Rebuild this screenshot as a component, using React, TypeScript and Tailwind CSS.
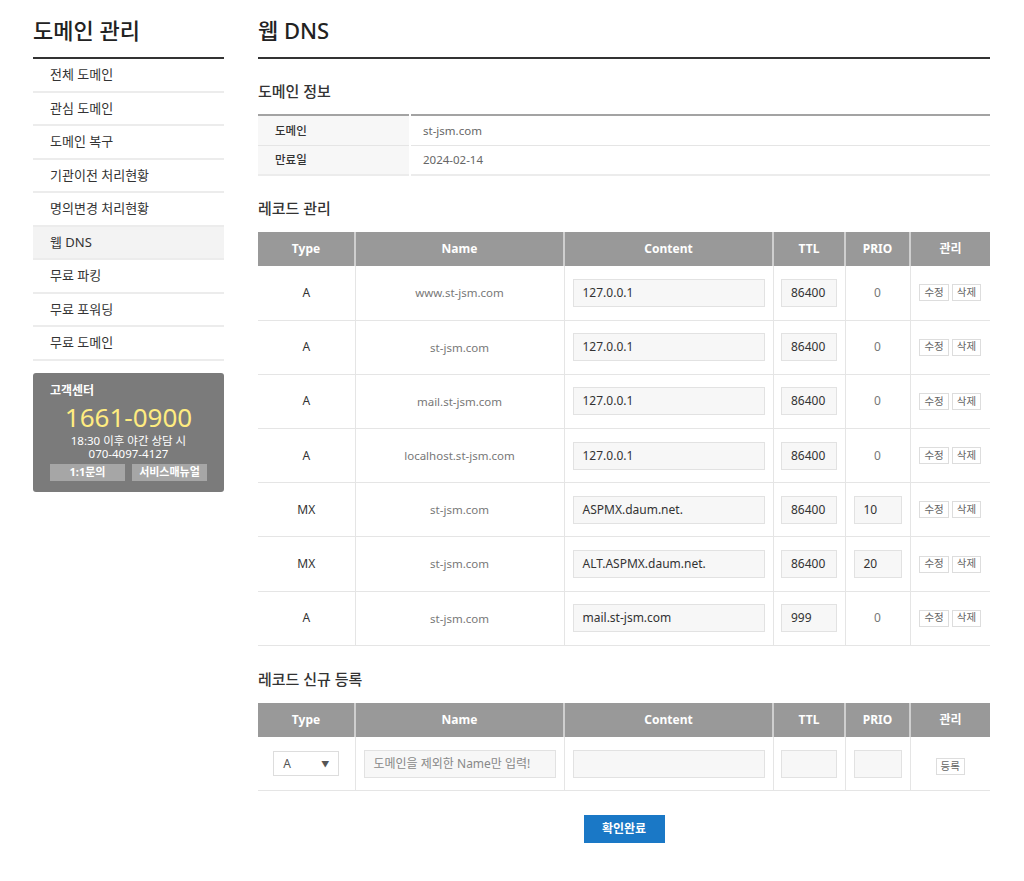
import React from "react";

const font = { fontFamily: '"Noto Sans", "Noto Sans CJK KR", sans-serif' };

const menu = [
  "전체 도메인",
  "관심 도메인",
  "도메인 복구",
  "기관이전 처리현황",
  "명의변경 처리현황",
  "웹 DNS",
  "무료 파킹",
  "무료 포워딩",
  "무료 도메인",
];

const records = [
  { type: "A", name: "www.st-jsm.com", content: "127.0.0.1", ttl: "86400", prio: "0", prioInput: false },
  { type: "A", name: "st-jsm.com", content: "127.0.0.1", ttl: "86400", prio: "0", prioInput: false },
  { type: "A", name: "mail.st-jsm.com", content: "127.0.0.1", ttl: "86400", prio: "0", prioInput: false },
  { type: "A", name: "localhost.st-jsm.com", content: "127.0.0.1", ttl: "86400", prio: "0", prioInput: false },
  { type: "MX", name: "st-jsm.com", content: "ASPMX.daum.net.", ttl: "86400", prio: "10", prioInput: true },
  { type: "MX", name: "st-jsm.com", content: "ALT.ASPMX.daum.net.", ttl: "86400", prio: "20", prioInput: true },
  { type: "A", name: "st-jsm.com", content: "mail.st-jsm.com", ttl: "999", prio: "0", prioInput: false },
];

function Head() {
  const cols = ["Type", "Name", "Content", "TTL", "PRIO", "관리"];
  return (
    <thead>
      <tr className="h-[34px] bg-[#999999]">
        {cols.map((c, i) => (
          <th
            key={c}
            className={`text-[12px] font-bold text-white ${i > 0 ? "border-l-2 border-[#cfcfcf]" : ""}`}
          >
            {c}
          </th>
        ))}
      </tr>
    </thead>
  );
}

function Cols() {
  return (
    <colgroup>
      <col className="w-[97px]" />
      <col className="w-[209px]" />
      <col className="w-[209px]" />
      <col className="w-[72px]" />
      <col className="w-[65px]" />
      <col className="w-[80px]" />
    </colgroup>
  );
}

function Box({ w, value, placeholder }: { w: string; value?: string; placeholder?: string }) {
  return (
    <div
      className={`${w} mx-auto flex h-[28px] items-center border border-[#e2e2e2] bg-[#f7f7f7] px-[9px] text-[12px] text-[#333]`}
    >
      {value ?? <span className="text-[#888]">{placeholder}</span>}
    </div>
  );
}

function SmallBtn({ children }: { children: React.ReactNode }) {
  return (
    <span className="inline-flex h-[17px] items-center border border-[#dddddd] bg-white px-[4px] text-[10.5px] text-[#666]">
      {children}
    </span>
  );
}

export default function App() {
  return (
    <div className="min-h-[881px] w-[1024px] bg-white text-[#333]" style={font}>
      <div className="flex pl-[33px]">
        {/* Sidebar */}
        <aside className="w-[191px] shrink-0">
          <div className="border-b-2 border-[#333] pb-[11px] pt-[14px]">
            <h1 className="text-[22px] leading-[32px] font-medium text-[#222]">도메인 관리</h1>
          </div>
          <ul>
            {menu.map((m) => (
              <li
                key={m}
                className={`flex h-[33.5px] items-center border-b-2 border-[#ececec] pl-[17px] text-[13px] text-[#333] ${
                  m === "웹 DNS" ? "bg-[#f3f3f3]" : ""
                }`}
              >
                {m}
              </li>
            ))}
          </ul>
          <div className="mt-[12px] rounded-[3px] bg-[#7b7b7b] px-[17px] pb-[11px] pt-[10px] text-white">
            <div className="text-[12px] font-bold leading-[16px]">고객센터</div>
            <div className="mt-[3px] text-center text-[26px] leading-[30px] text-[#ffec80]">1661-0900</div>
            <div className="mt-[2px] text-center text-[11.5px] leading-[13px]">18:30 이후 야간 상담 시</div>
            <div className="text-center text-[11.5px] leading-[13px]">070-4097-4127</div>
            <div className="mt-[4.5px] flex justify-between">
              <span className="flex h-[17px] w-[75px] items-center justify-center bg-[#a6a6a6] text-[11px] font-bold">
                1:1문의
              </span>
              <span className="flex h-[17px] w-[75px] items-center justify-center bg-[#a6a6a6] text-[11px] font-bold">
                서비스매뉴얼
              </span>
            </div>
          </div>
        </aside>

        {/* Main */}
        <main className="ml-[34px] w-[732px]">
          <div className="border-b-2 border-[#333] pb-[11px] pt-[14px]">
            <h1 className="text-[22px] leading-[32px] font-medium text-[#222]">웹 DNS</h1>
          </div>

          <h2 className="mb-[12px] mt-[21px] text-[15px] leading-[22px] font-medium text-[#333]">도메인 정보</h2>
          <table className="w-full table-fixed border-collapse border-t-2 border-[#a3a3a3] text-[11.5px]">
            <colgroup>
              <col className="w-[152px]" />
              <col />
            </colgroup>
            <tbody>
              <tr className="h-[30px] border-b border-[#e5e5e5]">
                <td className="border-r-2 border-white bg-[#f7f7f7] pl-[17px] font-medium text-[#333]">도메인</td>
                <td className="pl-[12px] text-[#666]">st-jsm.com</td>
              </tr>
              <tr className="h-[30px] border-b-2 border-[#ececec]">
                <td className="border-r-2 border-white bg-[#f7f7f7] pl-[17px] font-medium text-[#333]">만료일</td>
                <td className="pl-[12px] text-[#666]">2024-02-14</td>
              </tr>
            </tbody>
          </table>

          <h2 className="mb-[13px] mt-[21px] text-[15px] leading-[22px] font-medium text-[#333]">레코드 관리</h2>
          <table className="w-full table-fixed border-collapse">
            <Cols />
            <Head />
            <tbody>
              {records.map((r, i) => (
                <tr key={i} className="h-[54.2px] border-b border-[#e5e5e5]">
                  <td className="text-center text-[12px] text-[#333]">{r.type}</td>
                  <td className="border-l border-[#e5e5e5] text-center text-[11.5px] text-[#777]">{r.name}</td>
                  <td className="border-l border-[#e5e5e5]">
                    <Box w="w-[192px]" value={r.content} />
                  </td>
                  <td className="border-l border-[#e5e5e5]">
                    <Box w="w-[56px]" value={r.ttl} />
                  </td>
                  <td className="border-l border-[#e5e5e5] text-center text-[12px] text-[#777]">
                    {r.prioInput ? <Box w="w-[48px]" value={r.prio} /> : r.prio}
                  </td>
                  <td className="border-l border-[#e5e5e5]">
                    <div className="flex justify-center gap-[3px]">
                      <SmallBtn>수정</SmallBtn>
                      <SmallBtn>삭제</SmallBtn>
                    </div>
                  </td>
                </tr>
              ))}
            </tbody>
          </table>

          <h2 className="mb-[13px] mt-[22px] text-[15px] leading-[22px] font-medium text-[#333]">레코드 신규 등록</h2>
          <table className="w-full table-fixed border-collapse">
            <Cols />
            <Head />
            <tbody>
              <tr className="h-[54px] border-b border-[#e5e5e5]">
                <td>
                  <div className="mx-auto flex h-[25px] w-[66px] items-center justify-between border border-[#dddddd] bg-white px-[9px] text-[12px] text-[#555]">
                    <span>A</span>
                    <span className="text-[8px] text-[#555]">▼</span>
                  </div>
                </td>
                <td className="border-l border-[#e5e5e5]">
                  <Box w="w-[192px]" placeholder="도메인을 제외한 Name만 입력!" />
                </td>
                <td className="border-l border-[#e5e5e5]">
                  <Box w="w-[192px]" value="" />
                </td>
                <td className="border-l border-[#e5e5e5]">
                  <Box w="w-[56px]" value="" />
                </td>
                <td className="border-l border-[#e5e5e5]">
                  <Box w="w-[48px]" value="" />
                </td>
                <td className="border-l border-[#e5e5e5] text-center">
                  <SmallBtn>등록</SmallBtn>
                </td>
              </tr>
            </tbody>
          </table>

          <div className="mt-[24px] flex justify-center">
            <button className="flex h-[28px] w-[81px] items-center justify-center bg-[#1a78c6] text-[12px] font-bold text-white">
              확인완료
            </button>
          </div>
        </main>
      </div>
    </div>
  );
}
